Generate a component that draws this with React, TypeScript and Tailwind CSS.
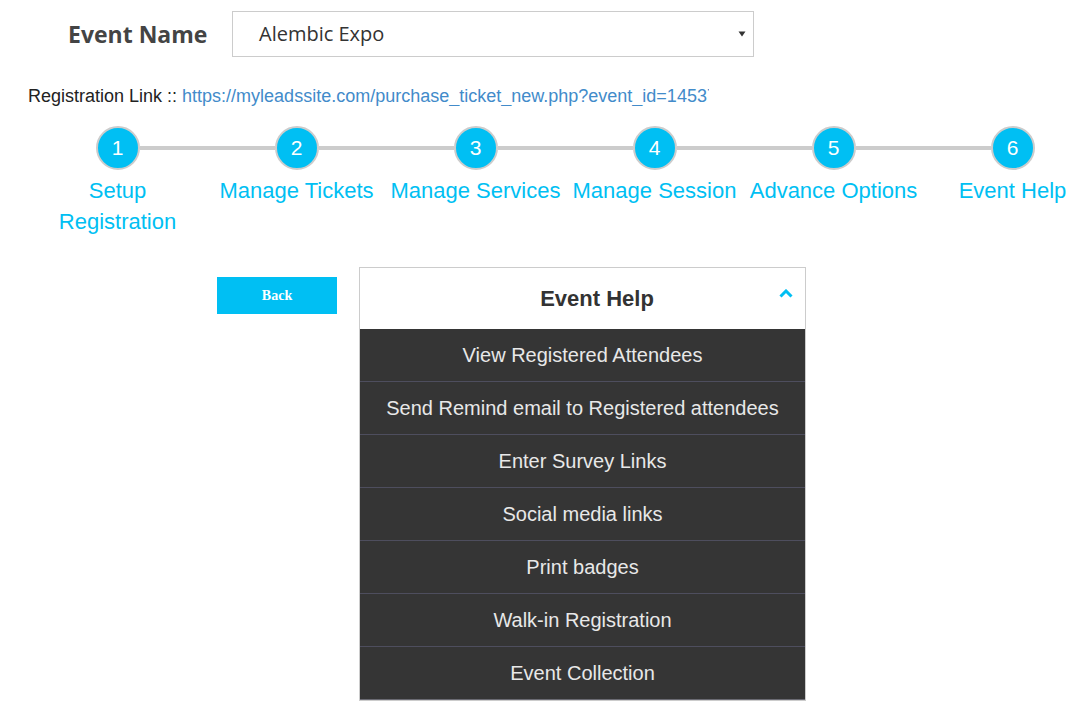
import React from "react";

const steps = [
  { n: 1, label: "Setup Registration" },
  { n: 2, label: "Manage Tickets" },
  { n: 3, label: "Manage Services" },
  { n: 4, label: "Manage Session" },
  { n: 5, label: "Advance Options" },
  { n: 6, label: "Event Help" },
];

const helpItems = [
  "View Registered Attendees",
  "Send Remind email to Registered attendees",
  "Enter Survey Links",
  "Social media links",
  "Print badges",
  "Walk-in Registration",
  "Event Collection",
];

export default function App() {
  return (
    <div className="w-full min-h-[714px] overflow-hidden bg-white font-['Liberation_Sans',Arial,sans-serif]">
      {/* event selector */}
      <div className="flex items-center pt-[11px] pl-[68px]">
        <div className="w-[164px] font-['Open_Sans',sans-serif] text-[23px] font-bold text-[#444]">
          Event Name
        </div>
        <div className="flex h-[46px] w-[522px] items-center justify-between border border-[#ccc] pl-[26px] pr-[7px]">
          <span className="font-['Open_Sans',sans-serif] text-[20px] text-[#333]">Alembic Expo</span>
          <svg width="8" height="6" viewBox="0 0 8 6">
            <path d="M0.5 0.5 L7.5 0.5 L4 5.5 Z" fill="#333" />
          </svg>
        </div>
      </div>

      <div className="ml-[28px] mt-[29px] w-[681px] overflow-hidden whitespace-nowrap text-[18px] leading-[20px] text-[#222]">
        Registration Link :: <a className="text-[#428bca]">https://myleadssite.com/purchase_ticket_new.php?event_id=14537</a>
      </div>

      {/* steps */}
      <div className="ml-[28px] mt-[20px] flex">
        {steps.map((s, i) => (
          <div key={s.n} className="flex w-[179px] shrink-0 flex-col items-center">
            <div className="flex w-full items-center">
              <div className={`h-[4px] flex-1 ${i === 0 ? "" : "bg-[#ccc]"}`} />
              <div className="flex h-[44px] w-[44px] items-center justify-center rounded-full border-[2px] border-[#ccc] bg-[#00bff3] text-[21px] text-white">
                {s.n}
              </div>
              <div className={`h-[4px] flex-1 ${i === steps.length - 1 ? "" : "bg-[#ccc]"}`} />
            </div>
            <div className="mt-[5px] whitespace-normal text-center text-[22px] leading-[31px] text-[#00bff3]">{s.label}</div>
          </div>
        ))}
      </div>

      {/* back + help panel */}
      <div className="mt-[30px] flex items-start pl-[217px]">
        <button className="mt-[10px] h-[37px] w-[120px] bg-[#00bff3] font-['Liberation_Serif',serif] text-[14px] font-bold text-white">
          Back
        </button>
        <div className="ml-[22px] w-[447px] border border-[#ccc]">
          <div className="relative flex h-[61px] items-center justify-center bg-white pl-[29px]">
            <div className="text-center text-[22px] font-bold text-[#333]">Event Help</div>
            <svg width="14" height="9" viewBox="0 0 14 9" className="absolute right-[12px] top-[21px]">
              <polyline points="1.5,7.5 7,2 12.5,7.5" fill="none" stroke="#00bff3" strokeWidth="3" />
            </svg>
          </div>
          <div className="bg-[#353535]">
            {helpItems.map((item, i) => (
              <div
                key={item}
                className={`flex h-[53px] items-center justify-center text-[20px] text-[#e8e8e8] ${
                  i === helpItems.length - 1 ? "border-b border-[#6a6a72]" : "border-b border-[#4e4e5e]"
                }`}
              >
                {item}
              </div>
            ))}
          </div>
        </div>
      </div>
    </div>
  );
}
